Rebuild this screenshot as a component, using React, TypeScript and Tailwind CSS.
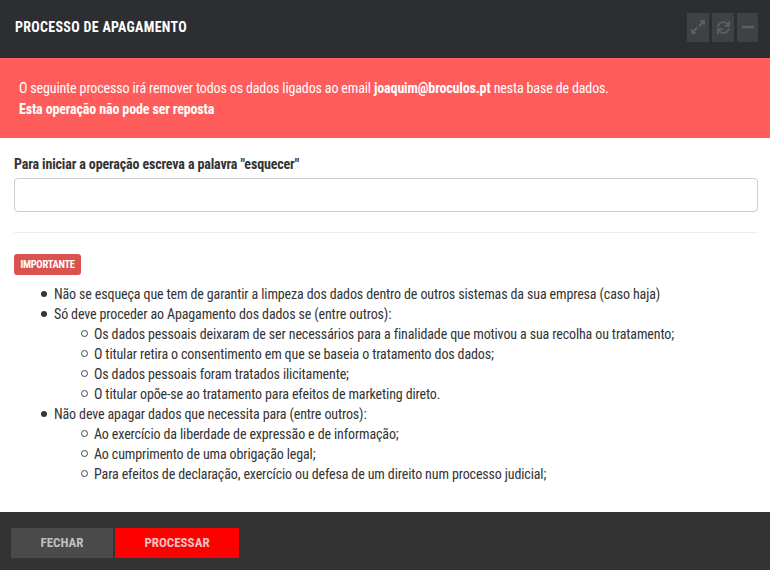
import { FaExpandAlt, FaMinus, FaSync } from "react-icons/fa";

const disc = "relative before:absolute before:left-[-13px] before:top-[7px] before:w-[6px] before:h-[6px] before:rounded-full before:bg-[#333]";
const circle = "relative before:absolute before:left-[-13.5px] before:top-[6px] before:w-[7px] before:h-[7px] before:rounded-full before:border before:border-[#444]";

const App: React.FC = () => {
  return (
    <div className="w-[770px] h-[570px] flex flex-col bg-white font-['Roboto',sans-serif] text-[14px] text-[#333] overflow-hidden [font-stretch:87%]">
      <div className="h-[58px] bg-[#2c2e32] flex items-center justify-between pl-[15px] pr-[12px]">
        <h1 className="text-[14px] font-bold text-white uppercase mb-[4px] tracking-[0.3px]">Processo de Apagamento</h1>
        <div className="flex gap-[3px] mb-[4px]">
          <div className="w-[22px] h-[29px] bg-[#3f4145] flex items-center justify-center text-[#5d5f62] text-[16px]">
            <FaExpandAlt />
          </div>
          <div className="w-[22px] h-[29px] bg-[#3f4145] flex items-center justify-center text-[#5d5f62] text-[13px]">
            <FaSync />
          </div>
          <div className="w-[21px] h-[29px] bg-[#3f4145] flex items-center justify-center text-[#5d5f62] text-[14px]">
            <FaMinus />
          </div>
        </div>
      </div>

      <div className="h-[80px] bg-[#ff5c5c] text-white px-[19px] pt-[20px] leading-[21px] tracking-[-0.14px]">
        <p>
          O seguinte processo irá remover todos os dados ligados ao email <b className="font-bold">joaquim@broculos.pt</b> nesta base de dados.
        </p>
        <p className="font-bold">Esta operação não pode ser reposta</p>
      </div>

      <div className="flex-1 pl-[14px] pr-[12px] pt-[16px]">
        <label className="block font-bold leading-[20px] mb-[4px] tracking-[-0.14px]">Para iniciar a operação escreva a palavra "esquecer"</label>
        <input className="block w-full h-[34px] border border-[#ccc] rounded-[4px] bg-white" />
        <hr className="mt-[20px] mb-[21px] border-t border-[#eee]" />
        <span className="inline-block h-[21px] px-[6.5px] bg-[#d9534f] rounded-[3px] text-white text-[10.5px] font-bold leading-[21px] align-top tracking-[-0.3px]">IMPORTANTE</span>
        <ul className="list-none pl-[40px] mt-[9px] leading-[20px] tracking-[-0.13px]">
          <li className={disc}>Não se esqueça que tem de garantir a limpeza dos dados dentro de outros sistemas da sua empresa (caso haja)</li>
          <li className={disc}>
            Só deve proceder ao Apagamento dos dados se (entre outros):
            <ul className="list-none pl-[40px]">
              <li className={circle}>Os dados pessoais deixaram de ser necessários para a finalidade que motivou a sua recolha ou tratamento;</li>
              <li className={circle}>O titular retira o consentimento em que se baseia o tratamento dos dados;</li>
              <li className={circle}>Os dados pessoais foram tratados ilicitamente;</li>
              <li className={circle}>O titular opõe-se ao tratamento para efeitos de marketing direto.</li>
            </ul>
          </li>
          <li className={disc}>
            Não deve apagar dados que necessita para (entre outros):
            <ul className="list-none pl-[40px]">
              <li className={circle}>Ao exercício da liberdade de expressão e de informação;</li>
              <li className={circle}>Ao cumprimento de uma obrigação legal;</li>
              <li className={circle}>Para efeitos de declaração, exercício ou defesa de um direito num processo judicial;</li>
            </ul>
          </li>
        </ul>
      </div>

      <div className="h-[58px] bg-[#333333] flex items-start gap-[2px] pl-[11px] pt-[16px]">
        <button className="w-[102px] h-[30px] bg-[#4a4a4a] text-[#c0c0c0] text-[13px] font-bold">FECHAR</button>
        <button className="w-[124px] h-[30px] bg-[#ff0000] text-[#f0c0c0] text-[13px] font-bold">PROCESSAR</button>
      </div>
    </div>
  );
};

export default App;
